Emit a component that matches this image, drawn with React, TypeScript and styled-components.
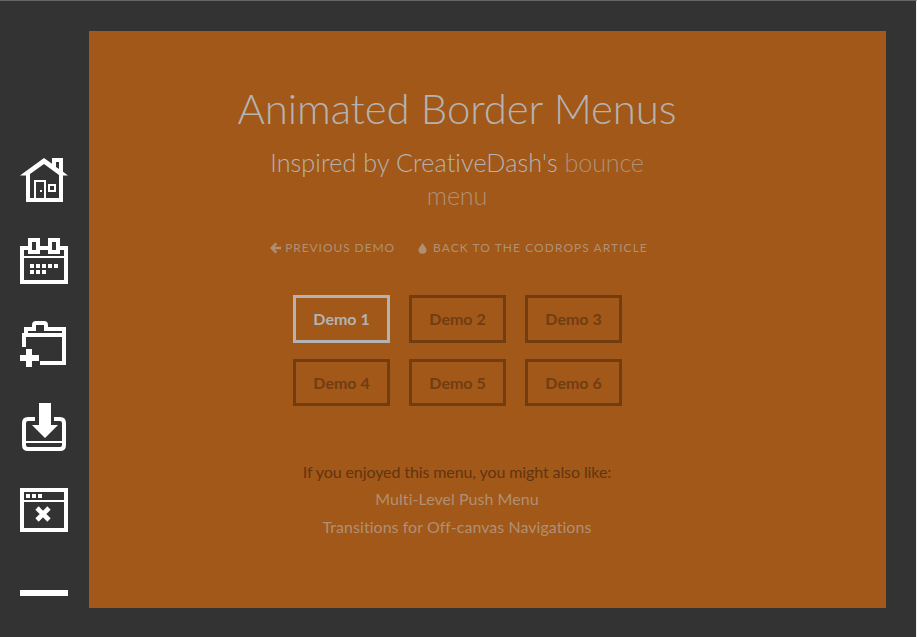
import React from "react";
import styled, { createGlobalStyle } from "styled-components";

const GlobalStyle = createGlobalStyle`
  *, *::before, *::after { box-sizing: border-box; }
  body {
    margin: 0;
    background: #333;
    font-family: Lato, Calibri, Arial, sans-serif;
    font-variant-ligatures: none;
    overflow: hidden;
  }
  a { color: inherit; text-decoration: none; }
`;

const Page = styled.div`
  display: flex;
  height: 637px;
  width: 917px;
  border-top: 1px solid #666;
  border-right: 1px solid #f0f0f0;
  background: #333;
`;

const Rail = styled.nav`
  display: flex;
  flex-direction: column;
  width: 89px;
  padding: 155px 0 0 20px;
  flex: none;
`;

const RailLink = styled.a<{ $gap?: number }>`
  display: block;
  line-height: 0;
  margin-top: ${(p) => p.$gap ?? 0}px;
`;

const MenuBars = styled.span`
  display: block;
  width: 48px;
  height: 6px;
  background: #fff;
`;

const Panel = styled.main`
  width: 797px;
  height: 577px;
  margin-top: 30px;
  padding: 50px 61px 0 0;
  background: #a25818;
  display: flex;
  flex-direction: column;
  align-items: center;
  text-align: center;
`;

const Title = styled.h1`
  margin: 0;
  font-size: 42px;
  line-height: 54px;
  font-weight: 300;
  letter-spacing: -0.13px;
  color: #b3b3b3;
  white-space: nowrap;
`;

const Subtitle = styled.p`
  width: 400px;
  margin: 11px 0 0;
  font-size: 25.2px;
  line-height: 32.5px;
  font-weight: 300;
  letter-spacing: 0.08px;
  color: #b3b3b3;
`;

const SoftLink = styled.a`
  color: #b09075;
  letter-spacing: -0.2px;
`;

const TopLinks = styled.nav`
  display: flex;
  gap: 23px;
  margin: 27px 0 0 4px;
  font-size: 12px;
  line-height: 20px;
  text-transform: uppercase;
  white-space: nowrap;
  color: #b09075;
`;

const TopLink = styled.a<{ $iconGap: number; $tracking: number }>`
  display: flex;
  align-items: center;
  gap: ${(p) => p.$iconGap}px;
  letter-spacing: ${(p) => p.$tracking}px;
`;

const DemoGrid = styled.nav`
  display: grid;
  grid-template-columns: repeat(3, 97px);
  grid-template-rows: 48px 47px;
  gap: 16px 19px;
  margin-top: 37px;
`;

const DemoLink = styled.a<{ $current?: boolean }>`
  display: block;
  padding: 11px 0 0 1px;
  border: 3px solid ${(p) => (p.$current ? "#b3b3b3" : "#713d11")};
  color: ${(p) => (p.$current ? "#b3b3b3" : "#713d11")};
  font-size: 16px;
  line-height: 20px;
  font-weight: 700;
`;

const Related = styled.section`
  margin-top: 52px;
  font-size: 16px;
  color: #613510;
`;

const RelatedText = styled.p`
  margin: 0;
  line-height: 27px;
  letter-spacing: -0.1px;
`;

const RelatedLink = styled.a`
  display: block;
  line-height: 28px;
  letter-spacing: 0.04px;
  color: #b09075;
`;

const Icon = ({ height = 48, children }: { height?: number; children: React.ReactNode }) => (
  <svg width="48" height={height} viewBox={`0 0 48 ${height}`} fill="#fff" fillRule="evenodd" aria-hidden="true">
    {children}
  </svg>
);

const HouseIcon = () => (
  <Icon>
    <path d="M0 19.5 24 2l8 5.8V2h11v13.8l5 3.700h-5V46H6V19.5zM24 8 10 18v24h4V24h12v18h13V19zM36 6v5l3 2V6z" />
    <path d="M16 26h8v16h-8z" fill="#333" />
    <path d="M20 34h2v2h-2z" />
    <path d="M28 28h8v8h-8zM30 30v4h4v-4z" />
  </Icon>
);

const CalendarIcon = () => (
  <Icon>
    <path d="M0 8h8V0h12v8h8V0h12v8h8v38H0zM4 12v6h40v-6h-4v4H28v-4h-8v4H8v-4zM4 20v22h40V20zM12 4v8h4V4zM32 4v8h4V4z" />
    <path d="M10 26h4v4h-4zM16 26h4v4h-4zM22 26h4v4h-4zM28 26h4v4h-4zM34 26h4v4h-4zM10 32h4v4h-4zM16 32h4v4h-4zM22 32h4v4h-4z" />
  </Icon>
);

const FolderAddIcon = () => (
  <Icon>
    <path d="M4 7h8V5q0-4 4-4h8q4 0 4 4v2h18v38H20v-4h22V17H6v10H2V13h2zM8 11v2h34v-2H24V5h-8v6z" />
    <path d="M6 29h6v6h7v6h-7v6H6v-6H0v-6h6z" />
  </Icon>
);

const DownloadIcon = () => (
  <Icon>
    <path d="M19 0h12v22h7L25 35 12 22h7z" />
    <path d="M15 16H8q-4 0-4 4v22q0 4 4 4h32q4 0 4-4V20q0-4-4-4h-6" fill="none" stroke="#fff" strokeWidth="4" />
    <path d="M6 38h36v2H6z" />
  </Icon>
);

const WindowCloseIcon = () => (
  <Icon height={44}>
    <path d="M0 0h48v44H0zM4 4v8h40V4zM4 14v26h40V14z" />
    <path d="M6 6h4v4H6zM12 6h4v4h-4zM18 6h4v4h-4z" />
    <path d="m17 20 12 12M29 20 17 32" stroke="#fff" strokeWidth="4.6" />
  </Icon>
);

const railItems = [
  { label: "Home", Glyph: HouseIcon, gap: 0 },
  { label: "Calendar", Glyph: CalendarIcon, gap: 34 },
  { label: "Add folder", Glyph: FolderAddIcon, gap: 34 },
  { label: "Download", Glyph: DownloadIcon, gap: 35 },
  { label: "Close window", Glyph: WindowCloseIcon, gap: 37 },
];

const ArrowIcon = () => (
  <svg width="11" height="12" viewBox="0 0 11 12" fill="none" stroke="currentColor" strokeWidth="2.4" aria-hidden="true">
    <path d="M6.300 1.300 1.700 6l4.600 4.700M2 6h9" />
  </svg>
);

const DropIcon = () => (
  <svg width="9" height="12" viewBox="0 0 9 12" fill="currentColor" aria-hidden="true">
    <path d="M4.500.5C5 3.200 8.500 5 8.500 8a4 3.700 0 0 1-8 0c0-3 3.500-4.800 4-7.500z" />
  </svg>
);

export default function App() {
  return (
    <>
      <GlobalStyle />
      <Page>
        <Rail>
          {railItems.map(({ label, Glyph, gap }) => (
            <RailLink key={label} href="#" aria-label={label} $gap={gap}>
              <Glyph />
            </RailLink>
          ))}
          <RailLink href="#" aria-label="Menu" $gap={58}>
            <MenuBars />
          </RailLink>
        </Rail>
        <Panel>
          <Title>Animated Border Menus</Title>
          <Subtitle>
            Inspired by CreativeDash's <SoftLink href="#">bounce menu</SoftLink>
          </Subtitle>
          <TopLinks>
            <TopLink href="#" $iconGap={4} $tracking={0.92}>
              <ArrowIcon />
              Previous Demo
            </TopLink>
            <TopLink href="#" $iconGap={6} $tracking={1.05}>
              <DropIcon />
              Back to the Codrops Article
            </TopLink>
          </TopLinks>
          <DemoGrid>
            {[1, 2, 3, 4, 5, 6].map((n) => (
              <DemoLink key={n} href="#" $current={n === 1}>
                Demo {n}
              </DemoLink>
            ))}
          </DemoGrid>
          <Related>
            <RelatedText>If you enjoyed this menu, you might also like:</RelatedText>
            <RelatedLink href="#">Multi-Level Push Menu</RelatedLink>
            <RelatedLink href="#">Transitions for Off-canvas Navigations</RelatedLink>
          </Related>
        </Panel>
      </Page>
    </>
  );
}
